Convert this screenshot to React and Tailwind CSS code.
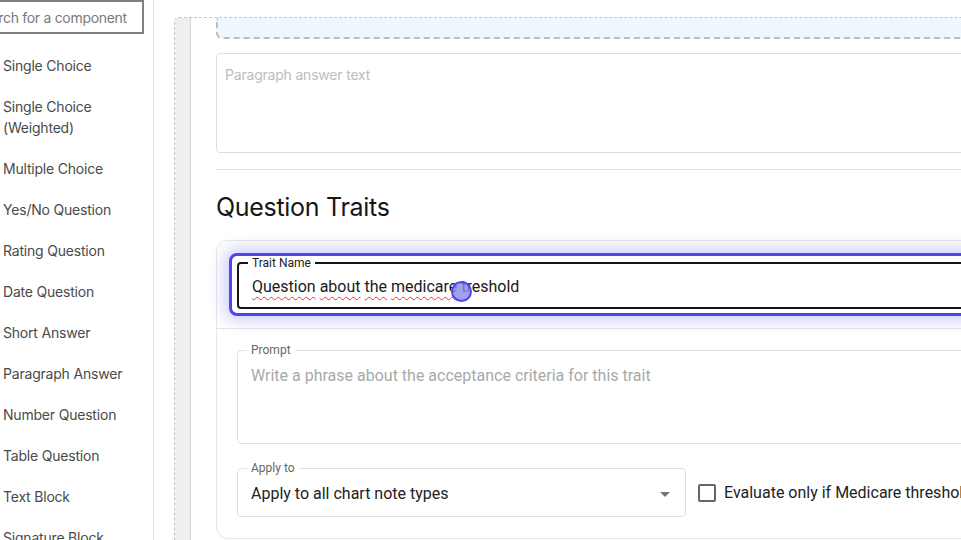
import React from 'react';

const components = [
  'Single Choice',
  'Single Choice (Weighted)',
  'Multiple Choice',
  'Yes/No Question',
  'Rating Question',
  'Date Question',
  'Short Answer',
  'Paragraph Answer',
  'Number Question',
  'Table Question',
  'Text Block',
  'Signature Block',
];

const sans = "font-['Inter','Noto_Sans',sans-serif]";
const roboto = "font-['Roboto','Liberation_Sans',sans-serif]";

const Squiggle = ({ children }) => (
  <span className="underline decoration-wavy decoration-[#e53935] decoration-1 underline-offset-[4px]">{children}</span>
);

const Sidebar = () => (
  <aside className={`w-[154px] shrink-0 border-r border-[#dcdcdc] bg-white ${sans}`}>
    <div className="-ml-[40px] w-[184px] h-[34px] border-2 border-[#808080] flex items-center pl-[12px] text-[14px] text-[#7a7a7a] tracking-[-0.3px]">
      Search for a component
    </div>
    <ul className="mt-[11px] w-[135px]">
      {components.map((c) => (
        <li key={c} className="pl-[3px] py-[10px] text-[14px] leading-[21px] text-[#4a4a4a] tracking-[-0.2px]">
          {c}
        </li>
      ))}
    </ul>
  </aside>
);

const TraitCard = () => (
  <div className="mt-[17px] rounded-xl border border-[#e6e6e6] bg-white">
    {/* Trait name, focused */}
    <div className="p-[12px] border-b border-[#e6e6e6]">
      <div className="relative rounded-[8px] border-[3px] border-[#4f46e5] px-[5px] pb-[4px] shadow-[0_0_16px_4px_rgba(99,102,241,0.35)] bg-white">
        <fieldset className={`rounded-[4px] border-2 border-[#161616] px-[9px] ${roboto}`}>
          <legend className="px-[4px] text-[12px] leading-[14px] text-[#222]">Trait Name</legend>
          <div className="mt-[5px] pb-[8px] pl-[4px] text-[16px] leading-6 text-[#1a1a1a] whitespace-nowrap">
            <Squiggle>Question</Squiggle> <Squiggle>about</Squiggle> <Squiggle>the</Squiggle> <Squiggle>medicare</Squiggle> treshold
          </div>
        </fieldset>
        {/* click indicator */}
        <span className="absolute left-[219px] top-[25px] w-[21px] h-[21px] rounded-full border-2 border-[#5046e5] bg-[#8b87e6]/80" />
      </div>
    </div>

    <div className={`pl-[20px] pt-[14px] pb-[21px] ${roboto}`}>
      <fieldset className="rounded-[4px] border border-[#e0e0e0] px-[9px]">
        <legend className="px-[4px] text-[12px] leading-[14px] text-[#666]">Prompt</legend>
        <div className="h-[86px] pt-[7px] pl-[4px] text-[16px] leading-6 text-[#a9a9a9] whitespace-nowrap">
          Write a phrase about the acceptance criteria for this trait
        </div>
      </fieldset>

      <div className="mt-[17px] flex items-center">
        <fieldset className="w-[449px] shrink-0 rounded-[4px] border border-[#e0e0e0] px-[9px]">
          <legend className="px-[4px] text-[12px] leading-[14px] text-[#666]">Apply to</legend>
          <div className="flex items-center justify-between pt-[7px] pb-[10px] pl-[4px]">
            <span className="text-[16px] leading-6 text-[#222]">Apply to all chart note types</span>
            <svg viewBox="0 0 24 24" className="w-6 h-6 -mr-[1px] fill-[#757575]">
              <path d="M7 10l5 5 5-5z" />
            </svg>
          </div>
        </fieldset>
        <label className="mt-[7px] ml-[12px] flex items-center gap-[8px] whitespace-nowrap">
          <span className="w-[18px] h-[18px] rounded-[2px] border-2 border-[#666]" />
          <span className="text-[16px] leading-6 text-[#222]">Evaluate only if Medicare threshold is reached</span>
        </label>
      </div>
    </div>
  </div>
);

export default function App() {
  return (
    <div className="flex w-[961px] h-[540px] overflow-hidden bg-white">
      <Sidebar />
      <main className="flex-1 min-w-0 overflow-hidden pl-[20px] pt-[17px]">
        <div className="flex h-full rounded-tl-[5px] border-l border-t border-dashed border-[#c4c4c4] overflow-hidden">
          <div className="w-[16px] shrink-0 bg-[#efefef] border-r border-[#d4d4d4]" />
          <div className={`w-[820px] shrink-0 pl-[25px] ${sans}`}>
            <div className="h-[21px] rounded-b-[6px] border-2 border-t-0 border-dashed border-[#bdbdbd] bg-[#eef6fe]" />
            <div className="mt-[14px] h-[100px] rounded-[4px] border border-[#dedede] pl-[8px] pt-[11px] text-[14px] leading-5 text-[#bdbdbd] tracking-[-0.2px]">
              Paragraph answer text
            </div>
            <div className="mt-[16px] border-t border-[#e3e3e3]" />
            <h2 className="mt-[21px] text-[25px] leading-8 text-[#161616] tracking-[-0.3px]">Question Traits</h2>
            <TraitCard />
          </div>
        </div>
      </main>
    </div>
  );
}
